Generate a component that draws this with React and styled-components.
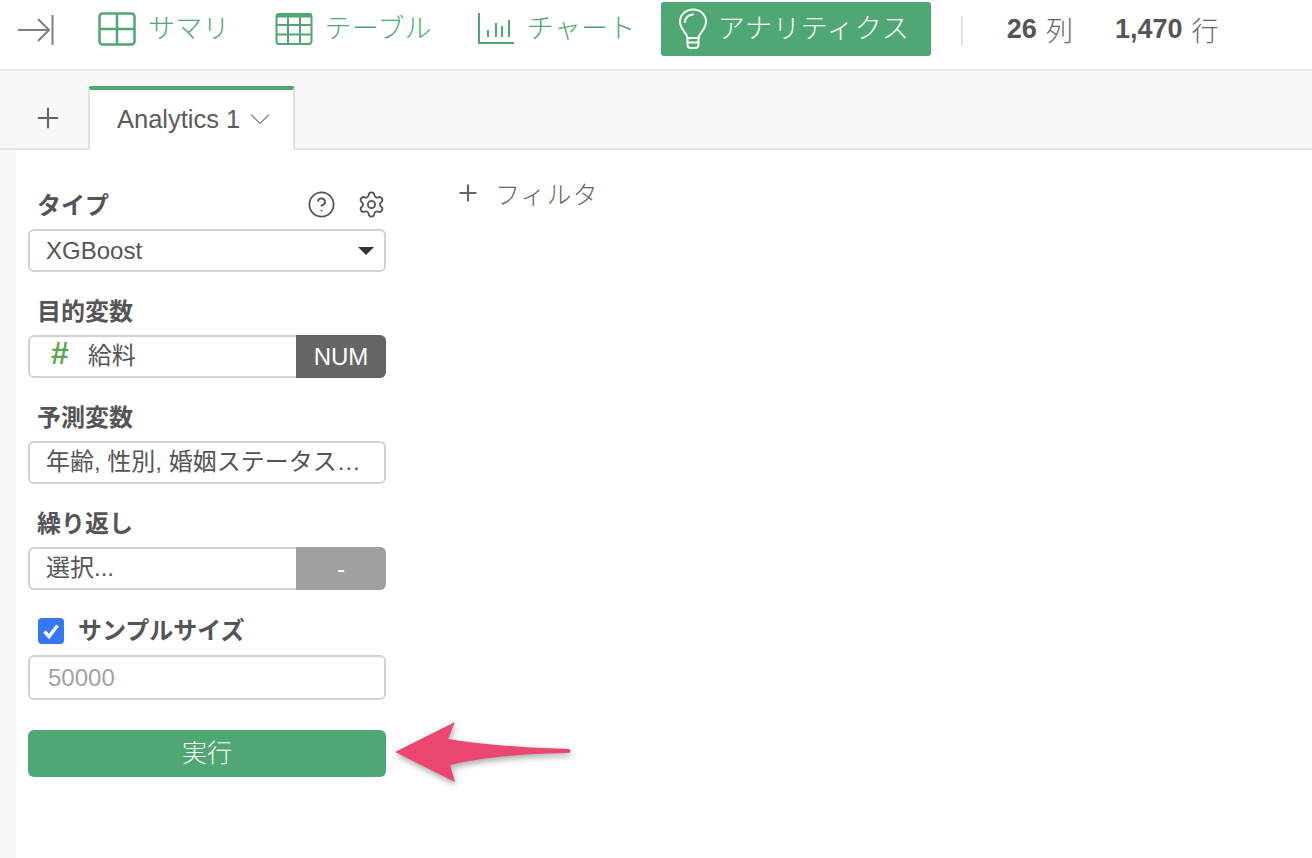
import React from 'react'
import styled, { createGlobalStyle } from 'styled-components'
import { Plus, Settings, CircleHelp } from 'lucide-react'

const Global = createGlobalStyle`
html, body {
  margin: 0;
  background: #fff;
  overflow: hidden;
}
* { box-sizing: border-box; }
`
const green = '#4fa873'
const Page = styled.div`
position: relative;
width: 1312px;
height: 858px;
display: flex;
flex-direction: column;
color: #555;
font-family: "Liberation Sans", "Noto Sans CJK JP", sans-serif;
`
const TopBar = styled.div`
height: 71px;
flex-shrink: 0;
display: flex;
align-items: flex-start;
padding: 2px 0 0 18px;
border-bottom: 2px solid #e9e9e9;
`
const CollapseIcon = styled.svg`
width: 36px;
height: 30px;
margin: 13px 21.5px 0 0;
flex-shrink: 0;
`
const NavItem = styled.div`
height: 54px;
display: flex;
align-items: center;
gap: 12px;
padding: 0 22.5px;
font-size: 27px;
font-weight: 300;
letter-spacing: 0.2px;
color: ${green};
`
const NavLabel = styled.span`
padding-bottom: 5px;
`
const ActiveNav = styled(NavItem)`
width: 270px;
margin-left: 3px;
padding: 0 0 0 17px;
gap: 10px;
background: ${green};
color: #fff;
border-radius: 3px;
letter-spacing: 0.8px;
`
const Divider = styled.div`
width: 2px;
height: 30px;
margin: 14px 44px 0 30px;
background: #e3e3e3;
`
const Stat = styled.div`
height: 54px;
display: flex;
align-items: center;
gap: 9px;
margin-right: 42px;
font-size: 27px;
font-weight: 300;
color: #666;
`
const StatNum = styled.b`
font-weight: 700;
color: #555;
`
const TabStrip = styled.div`
height: 79px;
flex-shrink: 0;
display: flex;
align-items: flex-end;
padding-left: 16px;
background: #f8f8f8;
border-bottom: 2px solid #e6e6e6;
`
const AddTab = styled.div`
width: 72px;
height: 64px;
display: flex;
align-items: center;
padding: 4px 0 0 16px;
color: #666;
`
const Tab = styled.div`
width: 207px;
height: 64px;
margin-bottom: -2px;
display: flex;
align-items: center;
gap: 10px;
padding: 0 0 2px 27px;
background: #fff;
border: 2px solid #e2e2e2;
border-top: 4px solid ${green};
border-bottom: 0;
border-radius: 3px 3px 0 0;
font-size: 25.5px;
color: #5c5c5c;
`
const Body = styled.div`
flex: 1;
display: flex;
background: #f8f8f8;
padding-left: 16px;
`
const Panel = styled.div`
flex: 1;
display: flex;
background: #fff;
`
const Side = styled.div`
width: 358px;
margin: 41px 0 0 12px;
display: flex;
flex-direction: column;
`
const LabelRow = styled.div`
height: 38px;
display: flex;
align-items: center;
justify-content: space-between;
padding: 0 0 14px 9px;
font-size: 24px;
font-weight: 700;
color: #555;
`
const IconGroup = styled.div`
display: flex;
align-items: center;
gap: 21px;
margin-top: 2px;
color: #555;
`
const Field = styled.div`
height: 43px;
margin-bottom: 25px;
display: flex;
align-items: stretch;
background: #fff;
border: 2px solid #d2d2d2;
border-radius: 6px;
font-size: 24px;
color: #555;
`
const InputField = styled(Field)`
height: 45px;
margin-bottom: 30px;
`
const FieldText = styled.div`
flex: 1;
display: flex;
align-items: center;
gap: ${p => p.$gap || 0}px;
padding: 0 16px ${p => p.$latin ? 0 : 6}px ${p => p.$left || 16}px;
white-space: nowrap;
color: ${p => p.$muted ? '#a2a2a2' : '#555'};
`
const Caret = styled.span`
width: 0;
height: 0;
margin-left: auto;
margin-right: -6px;
border-left: 8px solid transparent;
border-right: 8px solid transparent;
border-top: 8px solid #333;
`
const Hash = styled.span`
font-size: 32px;
font-weight: 700;
color: #5aa652;
`
const Badge = styled.div`
width: 90px;
margin: -2px -2px -2px 0;
display: flex;
align-items: center;
justify-content: center;
background: ${p => p.$off ? '#a0a0a0' : '#666'};
border-radius: 0 6px 6px 0;
color: #fff;
font-size: 24px;
`
const CheckRow = styled(LabelRow)`
justify-content: flex-start;
gap: 14px;
height: 32px;
margin-bottom: 8px;
padding: 0 0 6px 10px;
`
const CheckBox = styled.span`
width: 26px;
height: 26px;
margin-top: 6px;
display: flex;
align-items: center;
justify-content: center;
background: #3478f6;
border-radius: 4px;
`
const RunButton = styled.div`
height: 47px;
display: flex;
align-items: center;
justify-content: center;
padding-bottom: 6px;
background: ${green};
border-radius: 6px;
color: #fff;
font-size: 25px;
font-weight: 300;
`
const FilterArea = styled.div`
margin: 27px 0 0 69px;
height: 32px;
display: flex;
align-items: center;
gap: 14px;
font-size: 25px;
font-weight: 300;
letter-spacing: 1px;
color: #666;
`
const Arrow = styled.svg`
position: absolute;
left: 385px;
top: 712px;
filter: drop-shadow(1px 3px 3px rgba(0, 0, 0, 0.35));
`

const SummaryIcon = () => (
  <svg width="38" height="34" viewBox="0 0 38 34" fill="none" stroke={green} strokeWidth="2.5">
    <rect x="1.5" y="1.5" width="35" height="31" rx="3" />
    <path d="M19 1.5v31M1.5 17h35" />
  </svg>
)
const TableIcon = () => (
  <svg width="38" height="34" viewBox="0 0 38 34" fill="none" stroke={green} strokeWidth="2">
    <rect x="1.5" y="2" width="35" height="30" rx="3" />
    <path d="M1.5 3.5h35" strokeWidth="4" />
    <path d="M13 2v30M25 2v30M1.5 13h35M1.5 22.5h35" />
  </svg>
)
const ChartIcon = () => (
  <svg width="38" height="34" viewBox="0 0 38 34" fill="none" stroke={green} strokeWidth="2">
    <path d="M2 1v30h35" />
    <path d="M11 25v-7M19 25V11M25 25V14M32 25V8" />
  </svg>
)
const BulbIcon = () => (
  <svg width="30" height="42" viewBox="0 0 30 42" fill="none" stroke="#fff" strokeWidth="2" strokeLinecap="round">
    <path d="M9.5 30c0-5-7.5-8-7.5-16.5C2 6.5 8 1.5 15 1.5s13 5 13 12c0 8.5-7.5 11.5-7.5 16.5z" />
    <path d="M7 14c0-4 3.5-7.5 8-7.5" />
    <path d="M9.5 30v6.5c0 2 1.5 3.5 3.5 3.5h4c2 0 3.5-1.5 3.5-3.5V30M9.5 34.5h11" />
  </svg>
)

export default function App() {
  return (
    <Page>
      <Global />
      <TopBar>
        <CollapseIcon viewBox="0 0 36 30" fill="none" stroke="#808080" strokeWidth="2">
          <path d="M0 15h31M20 4l11 11-11 11" />
          <path d="M34.5 0v30" />
        </CollapseIcon>
        <NavItem><SummaryIcon /><NavLabel>サマリ</NavLabel></NavItem>
        <NavItem><TableIcon /><NavLabel>テーブル</NavLabel></NavItem>
        <NavItem><ChartIcon /><NavLabel>チャート</NavLabel></NavItem>
        <ActiveNav><BulbIcon /><NavLabel>アナリティクス</NavLabel></ActiveNav>
        <Divider />
        <Stat><StatNum>26</StatNum>列</Stat>
        <Stat><StatNum>1,470</StatNum>行</Stat>
      </TopBar>
      <TabStrip>
        <AddTab><Plus size={32} strokeWidth={1.6} /></AddTab>
        <Tab>
          Analytics 1
          <svg width="20" height="12" viewBox="0 0 20 12" fill="none" stroke="#888" strokeWidth="1.3">
            <path d="M1 1.5l9 9 9-9" />
          </svg>
        </Tab>
      </TabStrip>
      <Body>
        <Panel>
          <Side>
            <LabelRow>
              タイプ
              <IconGroup>
                <CircleHelp size={29} strokeWidth={1.5} />
                <Settings size={29} strokeWidth={1.5} />
              </IconGroup>
            </LabelRow>
            <Field>
              <FieldText $latin>XGBoost<Caret /></FieldText>
            </Field>
            <LabelRow>目的変数</LabelRow>
            <Field>
              <FieldText $left={21} $gap={19}><Hash>#</Hash>給料</FieldText>
              <Badge>NUM</Badge>
            </Field>
            <LabelRow>予測変数</LabelRow>
            <Field>
              <FieldText>年齢, 性別, 婚姻ステータス…</FieldText>
            </Field>
            <LabelRow>繰り返し</LabelRow>
            <Field>
              <FieldText>選択...</FieldText>
              <Badge $off>-</Badge>
            </Field>
            <CheckRow>
              <CheckBox>
                <svg width="20" height="20" viewBox="0 0 20 20" fill="none" stroke="#fff" strokeWidth="3.4">
                  <path d="M3.5 10.5l4.5 5 8.5-11" />
                </svg>
              </CheckBox>
              サンプルサイズ
            </CheckRow>
            <InputField>
              <FieldText $latin $left={18} $muted>50000</FieldText>
            </InputField>
            <RunButton>実行</RunButton>
          </Side>
          <FilterArea><Plus size={26} strokeWidth={2} />フィルタ</FilterArea>
        </Panel>
      </Body>
      <Arrow width="200" height="80" viewBox="0 0 200 80">
        <path d="M10 40 L70 10 L63 27 Q110 35 184 37 Q187 39 184 41 Q110 42 65 53 L70 70 Z" fill="#ea4771" />
      </Arrow>
    </Page>
  )
}
